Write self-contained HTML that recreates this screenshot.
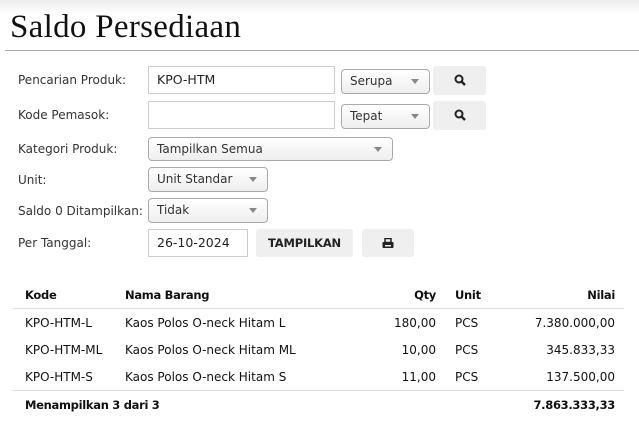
<!DOCTYPE html><html><head><style>
body{margin:0;width:639px;height:423px;background:#fff;font-family:"DejaVu Sans","Liberation Sans",sans-serif;font-size:12px;color:#222;position:relative;overflow:hidden}
.top{position:absolute;left:0;top:0;width:639px;height:14px;background:linear-gradient(#ececec,#fff)}
h1{position:absolute;left:10px;top:9px;margin:0;font-family:"Liberation Serif",serif;font-weight:normal;font-size:33px;color:#111;letter-spacing:0.3px}
.hr{position:absolute;left:5px;top:50px;width:634px;height:1px;background:#aaa}
.lbl{position:absolute;left:18px;font-size:12px;color:#333}
.in{position:absolute;border:1px solid #ccc;background:#fff;box-sizing:border-box;padding-left:8px;font-size:12.5px;line-height:24px}
.sel{position:absolute;border:1px solid #aaa;border-radius:4px;box-sizing:border-box;background:linear-gradient(#fff,#eee);padding-left:8px;font-size:12px;line-height:22px;color:#333}
.sel:after{content:"";position:absolute;right:10px;top:9px;border-left:4px solid transparent;border-right:4px solid transparent;border-top:5px solid #888}
.btn{position:absolute;background:#efefef;border-radius:3px;text-align:center;font-weight:bold;font-size:12px;color:#222}
.t{position:absolute;font-size:12px;color:#111;white-space:nowrap}
.r{text-align:right}
.b{font-weight:bold;font-size:11.5px;letter-spacing:-0.3px}
.line{position:absolute;left:13px;width:611px;height:1px;background:#ddd}
</style></head><body>
<div class="top"></div>
<h1>Saldo Persediaan</h1>
<div class="hr"></div>
<div class="lbl" style="top:73px">Pencarian Produk:</div>
<div class="in" style="left:148px;top:66px;width:187px;height:28px;line-height:26px">KPO-HTM</div>
<div class="sel" style="left:341px;top:69px;width:89px;height:25px">Serupa</div>
<div class="btn" style="left:433px;top:66px;width:53px;height:29px"><svg width="12" height="12" viewBox="0 0 12 12" style="margin-top:8px"><circle cx="5" cy="5" r="3.5" fill="none" stroke="#222" stroke-width="2"/><path d="M7.5 7.5L11 11" stroke="#222" stroke-width="2.4"/></svg></div>
<div class="lbl" style="top:108px">Kode Pemasok:</div>
<div class="in" style="left:148px;top:101px;width:187px;height:28px"></div>
<div class="sel" style="left:341px;top:104px;width:89px;height:25px">Tepat</div>
<div class="btn" style="left:433px;top:101px;width:53px;height:29px"><svg width="12" height="12" viewBox="0 0 12 12" style="margin-top:8px"><circle cx="5" cy="5" r="3.5" fill="none" stroke="#222" stroke-width="2"/><path d="M7.5 7.5L11 11" stroke="#222" stroke-width="2.4"/></svg></div>
<div class="lbl" style="top:142px">Kategori Produk:</div>
<div class="sel" style="left:148px;top:137px;width:245px;height:24px">Tampilkan Semua</div>
<div class="lbl" style="top:173px">Unit:</div>
<div class="sel" style="left:148px;top:167px;width:120px;height:25px">Unit Standar</div>
<div class="lbl" style="top:204px">Saldo 0 Ditampilkan:</div>
<div class="sel" style="left:148px;top:198px;width:120px;height:25px">Tidak</div>
<div class="lbl" style="top:236px">Per Tanggal:</div>
<div class="in" style="left:148px;top:229px;width:100px;height:28px;line-height:26px">26-10-2024</div>
<div class="btn" style="left:256px;top:229px;width:97px;height:28px;line-height:28px;font-size:11.5px;letter-spacing:-0.2px">TAMPILKAN</div>
<div class="btn" style="left:362px;top:229px;width:52px;height:28px"><svg width="12" height="11" viewBox="0 0 12 11" style="margin-top:9px"><rect x="3" y="0.5" width="6" height="4" fill="none" stroke="#222" stroke-width="1.5"/><rect x="0.5" y="4" width="11" height="6" rx="1" fill="#222"/><rect x="3" y="7" width="6" height="1.5" fill="#efefef"/></svg></div>

<div class="t b" style="left:25px;top:288px">Kode</div>
<div class="t b" style="left:125px;top:288px">Nama Barang</div>
<div class="t b r" style="right:203px;top:288px">Qty</div>
<div class="t b" style="left:455px;top:288px">Unit</div>
<div class="t b r" style="right:24px;top:288px">Nilai</div>
<div class="line" style="top:308px"></div>

<div class="t" style="left:25px;top:316px">KPO-HTM-L</div>
<div class="t" style="left:125px;top:316px">Kaos Polos O-neck Hitam L</div>
<div class="t r" style="right:203px;top:316px">180,00</div>
<div class="t" style="left:455px;top:316px">PCS</div>
<div class="t r" style="right:24px;top:316px">7.380.000,00</div>

<div class="t" style="left:25px;top:343px">KPO-HTM-ML</div>
<div class="t" style="left:125px;top:343px">Kaos Polos O-neck Hitam ML</div>
<div class="t r" style="right:203px;top:343px">10,00</div>
<div class="t" style="left:455px;top:343px">PCS</div>
<div class="t r" style="right:24px;top:343px">345.833,33</div>

<div class="t" style="left:25px;top:370px">KPO-HTM-S</div>
<div class="t" style="left:125px;top:370px">Kaos Polos O-neck Hitam S</div>
<div class="t r" style="right:203px;top:370px">11,00</div>
<div class="t" style="left:455px;top:370px">PCS</div>
<div class="t r" style="right:24px;top:370px">137.500,00</div>

<div class="line" style="top:390px"></div>
<div class="t b" style="left:25px;top:398px">Menampilkan 3 dari 3</div>
<div class="t b r" style="right:24px;top:398px">7.863.333,33</div>
</body></html>
